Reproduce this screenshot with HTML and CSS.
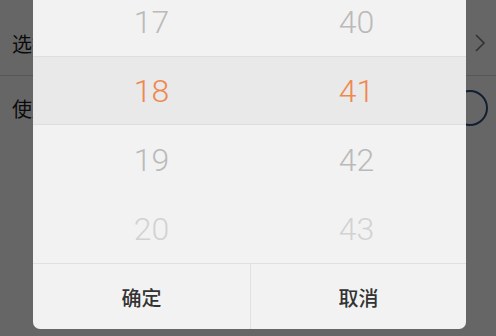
FILE: index.html
```html
<!DOCTYPE html>
<html lang="zh">
<head>
<meta charset="utf-8">
<link rel="stylesheet" href="styles.css">
</head>
<body>
<div class="page">
  <div class="row row-first">
    <span class="label">选择时间</span>
    <svg class="chev" width="12" height="20" viewBox="0 0 12 20"><polyline points="2,2 10,10 2,18" fill="none" stroke="#7a7a7a" stroke-width="1.6"/></svg>
  </div>
  <div class="row row-last">
    <span class="label">使用提醒</span>
    <span class="toggle"></span>
  </div>
</div>
<div class="mask"></div>
<div class="dialog">
  <div class="picker">
    <div class="prow"><span class="num far">17</span><span class="num far">40</span></div>
    <div class="prow sel"><span class="num on">18</span><span class="num on">41</span></div>
    <div class="prow"><span class="num far">19</span><span class="num far">42</span></div>
    <div class="prow"><span class="num farther">20</span><span class="num farther">43</span></div>
  </div>
  <div class="btns">
    <div class="btn">确定</div>
    <div class="btn">取消</div>
  </div>
</div>
</body>
</html>
```
FILE: styles.css
```css
html, body {
  margin: 0;
  padding: 0;
  width: 496px;
  height: 336px;
  overflow: hidden;
  background: #ffffff;
  font-family: "Noto Sans CJK SC", "Noto Sans", sans-serif;
}
.page {
  padding-top: 11px;
}
.row {
  height: 64px;
  display: flex;
  align-items: center;
  justify-content: space-between;
  padding: 0 10px 0 12px;
  border-bottom: 1px solid #d8d8d8;
}
.row-last {
  border-bottom: none;
}
.label {
  font-size: 20px;
  color: #1c1c1c;
}
.toggle {
  width: 32px;
  height: 32px;
  border: 2px solid #2f4f7a;
  border-radius: 50%;
  margin-right: -2px;
}
.mask {
  position: absolute;
  inset: 0;
  background: rgba(0, 0, 0, 0.6);
}
.dialog {
  position: absolute;
  left: 33px;
  top: -13px;
  width: 433px;
  height: 342px;
  background: #f2f2f2;
  border-radius: 7px;
  overflow: hidden;
  display: flex;
  flex-direction: column;
}
.prow {
  height: 69px;
  box-sizing: border-box;
  display: grid;
  grid-template-columns: 205px 205px;
  padding-left: 16px;
  align-items: center;
  justify-items: center;
}
.prow.sel {
  background: #e9e9e9;
  border-top: 1px solid #dedede;
  border-bottom: 1px solid #dedede;
}
.num {
  font-family: Roboto, "Noto Sans", sans-serif;
  font-weight: 300;
  font-size: 32px;
  line-height: 1;
}
.far { color: #bababa; }
.farther { color: #d2d2d2; }
.on { color: #ef8850; }
.btns {
  flex: 1;
  display: grid;
  grid-template-columns: 217px 216px;
  border-top: 1px solid #e0e0e0;
}
.btn {
  display: flex;
  align-items: center;
  justify-content: center;
  font-size: 20px;
  font-weight: 500;
  color: #333333;
  padding-top: 2px;
}
.btn + .btn {
  border-left: 1px solid #e0e0e0;
}
```
